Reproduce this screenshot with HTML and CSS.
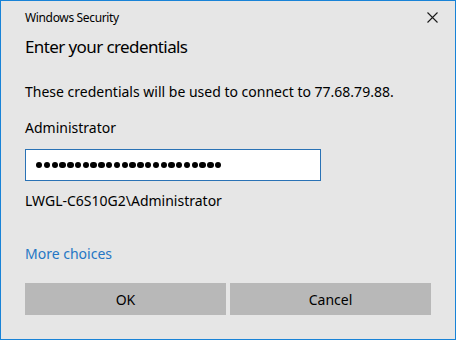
FILE: index.html
```html
<!DOCTYPE html>
<html>
<head>
<meta charset="utf-8">
<link rel="stylesheet" href="styles.css">
</head>
<body>
<div class="dialog">
  <div class="titlebar">
    <span class="app">Windows Security</span>
    <button class="close" aria-label="Close">
      <svg width="11" height="11" viewBox="0 0 11 11"><path d="M0.5 0.5 L10.5 10.5 M10.5 0.5 L0.5 10.5" stroke="#1a1a1a" stroke-width="1.1" fill="none"/></svg>
    </button>
  </div>
  <h1 class="heading">Enter your credentials</h1>
  <p class="info">These credentials will be used to connect to 77.68.79.88.</p>
  <p class="user">Administrator</p>
  <div class="field" role="textbox" aria-label="Password">
    <span class="dot"></span><span class="dot"></span><span class="dot"></span><span class="dot"></span><span class="dot"></span><span class="dot"></span><span class="dot"></span><span class="dot"></span><span class="dot"></span><span class="dot"></span><span class="dot"></span><span class="dot"></span><span class="dot"></span><span class="dot"></span><span class="dot"></span><span class="dot"></span><span class="dot"></span><span class="dot"></span><span class="dot"></span><span class="dot"></span><span class="dot"></span><span class="dot"></span><span class="dot"></span><span class="dot"></span>
  </div>
  <p class="domain">LWGL-C6S10G2\Administrator</p>
  <a class="more" href="#">More choices</a>
  <div class="buttons">
    <button class="btn">OK</button>
    <button class="btn">Cancel</button>
  </div>
</div>
</body>
</html>
```
FILE: styles.css
```css
html, body {
  margin: 0;
  padding: 0;
  background: #e6e6e6;
}
.dialog {
  width: 456px;
  height: 340px;
  box-sizing: border-box;
  border: 1px solid #1883d7;
  background: #e6e6e6;
  padding: 0 24px;
  display: flex;
  flex-direction: column;
  font-family: "Noto Sans", "Open Sans", sans-serif;
  color: #000;
}
.titlebar {
  height: 33px;
  display: flex;
  align-items: center;
  justify-content: space-between;
}
.app {
  font-size: 12px;
  letter-spacing: -0.35px;
  line-height: 33px;
  color: #000;
}
.close {
  width: 21px;
  height: 21px;
  margin-right: -12px;
  border: 0;
  padding: 0;
  background: transparent;
  display: flex;
  align-items: center;
  justify-content: center;
}
.heading {
  margin: 0;
  font-size: 17px;
  letter-spacing: -0.6px;
  font-weight: 400;
  line-height: 26px;
}
.info, .user, .domain {
  margin: 0;
  font-size: 14px;
  line-height: 20px;
}
.info { margin-top: 22px; }
.user { margin-top: 16px; }
.field {
  margin-top: 11px;
  width: 296px;
  height: 32px;
  box-sizing: border-box;
  border: 1px solid #2a72b5;
  background: #fff;
  display: flex;
  align-items: center;
  gap: 1.4px;
  padding-left: 10px;
}
.dot {
  width: 6.4px;
  height: 6.4px;
  border-radius: 50%;
  background: #000;
  flex: none;
}
.domain { margin-top: 10px; }
.more {
  margin-top: 33px;
  font-size: 14px;
  line-height: 20px;
  color: #2576c4;
  text-decoration: none;
  align-self: flex-start;
}
.buttons {
  margin-top: 19px;
  display: grid;
  grid-template-columns: 1fr 1fr;
  gap: 4px;
}
.btn {
  height: 32px;
  border: 0;
  background: #b8b8b8;
  font-family: "Noto Sans", "Open Sans", sans-serif;
  font-size: 14px;
  color: #000;
  padding: 0;
}
```
